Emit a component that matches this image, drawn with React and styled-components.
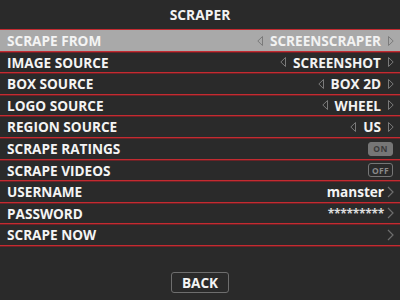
import React from 'react';
import styled, { createGlobalStyle } from 'styled-components';

const GlobalStyle = createGlobalStyle`
    html, body {
        margin: 0;
        padding: 0;
        background: #2a2a2a;
    }
    body {
        font-family: 'Open Sans', 'DejaVu Sans', sans-serif;
    }
`;

const rows = [
    { label: 'SCRAPE FROM', kind: 'list', value: 'SCREENSCRAPER', selected: true },
    { label: 'IMAGE SOURCE', kind: 'list', value: 'SCREENSHOT' },
    { label: 'BOX SOURCE', kind: 'list', value: 'BOX 2D' },
    { label: 'LOGO SOURCE', kind: 'list', value: 'WHEEL' },
    { label: 'REGION SOURCE', kind: 'list', value: 'US' },
    { label: 'SCRAPE RATINGS', kind: 'switch', on: true },
    { label: 'SCRAPE VIDEOS', kind: 'switch', on: false },
    { label: 'USERNAME', kind: 'link', value: 'manster' },
    { label: 'PASSWORD', kind: 'link', value: '*********', masked: true },
    { label: 'SCRAPE NOW', kind: 'link', value: '' },
];

const ROW_PITCH = 21.6;
const rowHeight = i => Math.round((i + 1) * ROW_PITCH) - Math.round(i * ROW_PITCH);

function Triangle({ dir }) {
    const points = dir === 'left' ? '5.5,0.5 0.8,5 5.5,9.5' : '0.5,0.5 5.2,5 0.5,9.5';
    return (
        <svg width='6' height='10' viewBox='0 0 6 10'>
            <polygon points={points} fill='none' stroke='#7a7a7a' strokeWidth='1' />
        </svg>
    );
}

function Chevron() {
    return (
        <svg width='7' height='12' viewBox='0 0 7 12'>
            <polyline points='1,1 6,6 1,11' fill='none' stroke='#6e6e6e' strokeWidth='1.2' />
        </svg>
    );
}

function App() {
    return (
        <Screen>
            <GlobalStyle />
            <Header>SCRAPER</Header>
            <List>
                {rows.map((row, i) => (
                    <Row key={row.label} $h={rowHeight(i)} $selected={row.selected}>
                        <Label>{row.label}</Label>
                        {row.kind === 'list' && (
                            <Value>
                                <Triangle dir='left' />
                                <span>{row.value}</span>
                                <Triangle dir='right' />
                            </Value>
                        )}
                        {row.kind === 'switch' && <Switch $on={row.on}>{row.on ? 'ON' : 'OFF'}</Switch>}
                        {row.kind === 'link' && (
                            <LinkValue>
                                <LinkText $masked={row.masked}>{row.value}</LinkText>
                                <Chevron />
                            </LinkValue>
                        )}
                    </Row>
                ))}
            </List>
            <Footer>
                <BackButton type='button'>BACK</BackButton>
            </Footer>
        </Screen>
    );
}

const Screen = styled.div`
    width: 400px;
    height: 300px;
    background: #2a2a2a;
    color: #f2f2f2;
    display: flex;
    flex-direction: column;
    overflow: hidden;
`;

const Header = styled.div`
    height: 29px;
    display: flex;
    align-items: center;
    justify-content: center;
    font-size: 13.8px;
    font-weight: 700;
`;

const List = styled.div`
    border-top: 1px solid #c42b31;
`;

const Row = styled.div`
    height: ${({ $h }) => $h}px;
    box-sizing: border-box;
    display: flex;
    align-items: center;
    justify-content: space-between;
    padding: 0 6px 0 7px;
    border-bottom: 1px solid #c42b31;
    box-shadow: 0 1px 0 #6b2226;
    background: ${({ $selected }) => ($selected ? '#a9a9a9' : 'transparent')};
    font-size: 13.6px;
    font-weight: 700;
`;

const Label = styled.span`
    color: #f4f4f4;
`;

const Value = styled.div`
    display: flex;
    align-items: center;
    gap: 7px;

    svg {
        display: block;
    }
`;

const LinkValue = styled.div`
    display: flex;
    align-items: center;
    gap: 3px;

    svg {
        display: block;
    }
`;

const LinkText = styled.span`
    font-size: ${({ $masked }) => ($masked ? '12px' : 'inherit')};
    color: ${({ $masked }) => ($masked ? '#dcdcdc' : '#f4f4f4')};
    letter-spacing: ${({ $masked }) => ($masked ? '-0.3px' : '0')};
`;

const Switch = styled.span`
    width: 25px;
    height: 14px;
    margin-right: 1px;
    box-sizing: border-box;
    border-radius: 3px;
    display: flex;
    align-items: center;
    justify-content: center;
    font-size: 8.5px;
    font-weight: 700;
    letter-spacing: 0.3px;
    border: 1px solid #767676;
    background: ${({ $on }) => ($on ? '#767676' : 'transparent')};
    color: ${({ $on }) => ($on ? '#3a3a3a' : '#8a8a8a')};
`;

const Footer = styled.div`
    flex: 1;
    display: flex;
    align-items: flex-end;
    justify-content: center;
    padding-bottom: 7px;
`;

const BackButton = styled.button`
    width: 58px;
    height: 21px;
    border: 1px solid #6e6e6e;
    border-radius: 3px;
    background: transparent;
    color: #f4f4f4;
    font-family: 'Open Sans', 'DejaVu Sans', sans-serif;
    font-size: 13.6px;
    font-weight: 700;
    padding: 0;
`;

export default App;
